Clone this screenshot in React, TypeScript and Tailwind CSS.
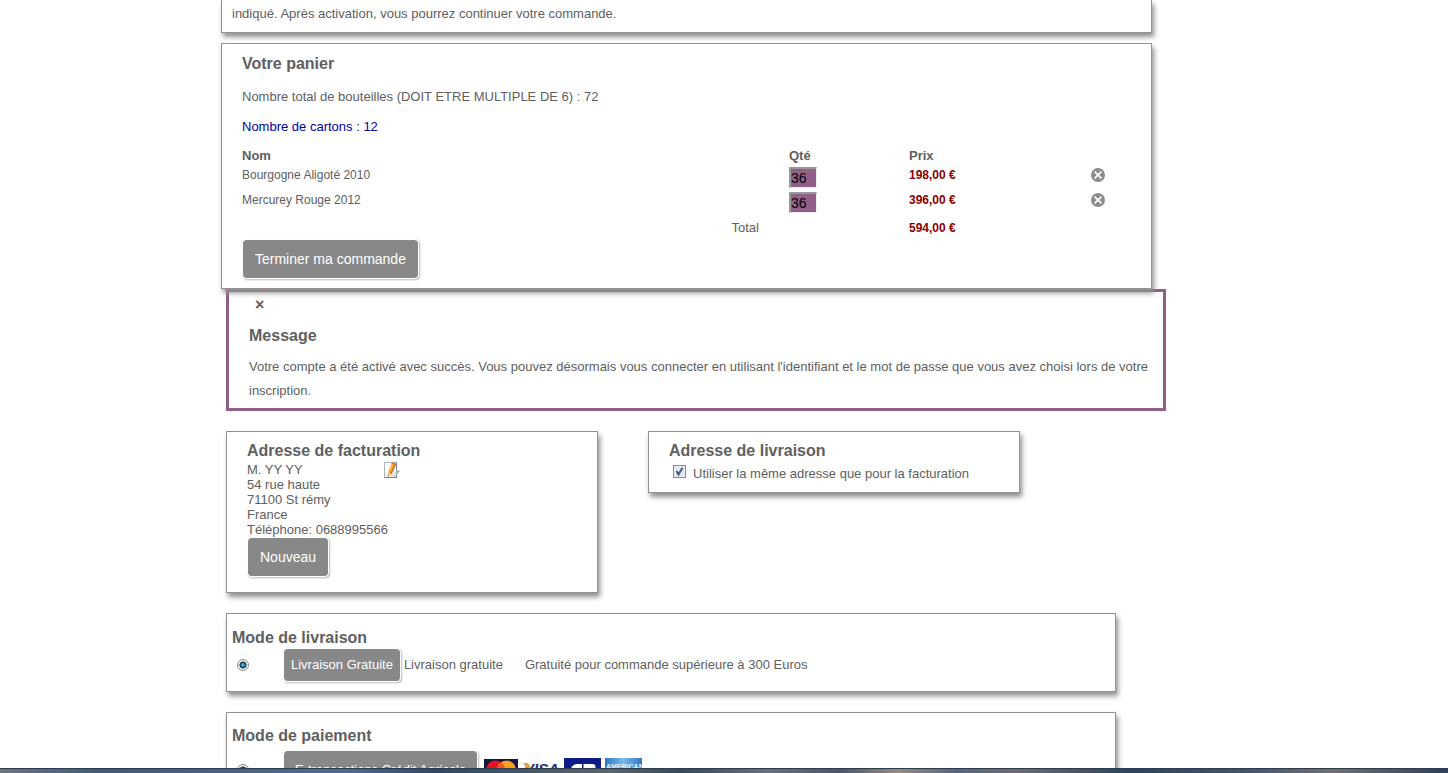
import { useState } from "react";
import type { ReactNode } from "react";

const cardStyle = "border border-[#929292] bg-white shadow-[2px_4px_5px_#909090]";

function Title({ children }: { children: ReactNode }) {
  return <h2 className="text-base leading-5 font-bold">{children}</h2>;
}

const buttonSizes = {
  large: "h-10 px-3 text-sm",
  small: "h-[34px] px-[7px] text-[13px]",
  wide: "h-10 px-[11px] text-[13px]",
};

function GreyButton({ children, size = "large" }: { children: ReactNode; size?: keyof typeof buttonSizes }) {
  return (
    <button
      type="button"
      className={`${buttonSizes[size]} shrink-0 rounded-[4px] border border-white bg-[#888] bg-clip-padding whitespace-nowrap text-white shadow-[1px_1px_2px_#bbb]`}
    >
      {children}
    </button>
  );
}

function RemoveIcon() {
  return (
    <svg viewBox="0 0 14 14" className="size-3.5" aria-hidden="true">
      <circle cx="7" cy="7" r="7" fill="#8d8d8d" />
      <path d="M3.600 3.600 10.400 10.400M10.400 3.600 3.600 10.400" stroke="#fff" strokeWidth="1.700" />
    </svg>
  );
}

function EditIcon() {
  return (
    <svg viewBox="0 0 16 16" className="size-4" aria-hidden="true">
      <defs>
        <linearGradient id="sheet" x1="0" y1="0" x2="1" y2="1">
          <stop offset="0.4" stopColor="#fff" />
          <stop offset="1" stopColor="#cfd6dd" />
        </linearGradient>
      </defs>
      <rect x="0.5" y="0.5" width="12" height="15" fill="url(#sheet)" stroke="#a9b5be" />
      <path d="M0.5 15.5h12v-15" fill="none" stroke="#718292" />
      <path d="M12.5 7.500l3 2-3 3z" fill="#aab4bd" stroke="#aab4bd" />
      <path d="M8 0.5 12 2 7.500 12 4 14 4 10z" fill="#f59a22" />
      <path d="M8.200 0.800 9.600 1.200 5.400 11 4.200 10.600z" fill="#ffc55e" />
      <path d="M11 1.600 12 2 7.500 12 6.600 11.600z" fill="#c96a12" />
      <path d="M8 0.200 12.200 1.800 11.500 3.200 7.300 1.800z" fill="#d9763c" />
      <path d="M4 10.500 7 12.300 4 14z" fill="#efd7a8" />
      <path d="M3.900 12.400 5.100 13.200 3.800 14.200z" fill="#444" />
    </svg>
  );
}

function Radio({ name, label }: { name: string; label: string }) {
  return (
    <input
      type="radio"
      name={name}
      aria-label={label}
      defaultChecked
      className="size-3 shrink-0 appearance-none rounded-full border border-[#8b8f92] bg-[#eef0f1] checked:bg-[radial-gradient(circle_closest-side,#7fd4ee_0,#2a86b0_30%,#123247_62%,#123247_66%,#eef0f1_76%)]"
    />
  );
}

function CardLogos() {
  return (
    <div className="flex gap-1">
      <svg viewBox="0 0 34 23" className="mt-px h-[23px] w-[34px]" role="img" aria-label="Mastercard">
        <rect width="34" height="23" fill="#1a1440" />
        <circle cx="11.500" cy="11" r="9.500" fill="#e3151f" />
        <circle cx="22.500" cy="11" r="9.500" fill="#f7a01e" />
        <path d="M17 3.200a9.500 9.500 0 0 1 0 15.600a9.500 9.500 0 0 1 0-15.600" fill="#f0591c" />
      </svg>
      <svg viewBox="0 0 38 24" className="h-6 w-[38px]" role="img" aria-label="Visa">
        <rect width="38" height="24" fill="#fff" />
        <text x="2" y="16" fontFamily="Liberation Sans" fontWeight="bold" fontStyle="italic" fontSize="15" fill="#1c2f7c">VISA</text>
        <path d="M1 5h5l3 5-2 3z" fill="#e4a33a" />
      </svg>
      <svg viewBox="0 0 37 24" className="h-6 w-[37px]" role="img" aria-label="CB">
        <rect width="37" height="24" fill="#101c86" />
        <path d="M18 6v12h-5a6 6 0 0 1 0-12zM19.500 6h9a3 3 0 0 1 0 6h-9zM19.500 12.500h9a3 3 0 0 1 0 6h-9z" fill="#fff" />
      </svg>
      <svg viewBox="0 0 37 24" className="h-6 w-[37px]" role="img" aria-label="American Express">
        <defs>
          <linearGradient id="amex">
            <stop offset="0" stopColor="#2f79c4" />
            <stop offset="0.500" stopColor="#79b8e8" />
            <stop offset="1" stopColor="#2f79c4" />
          </linearGradient>
        </defs>
        <rect width="37" height="24" fill="url(#amex)" />
        <text x="1" y="11" fontFamily="Liberation Sans" fontWeight="bold" fontSize="7" fill="#e8f4ff">AMERICAN</text>
      </svg>
    </div>
  );
}

const initialItems = [
  { id: 1, name: "Bourgogne Aligoté 2010", qty: "36", price: "198,00 €" },
  { id: 2, name: "Mercurey Rouge 2012", qty: "36", price: "396,00 €" },
];

function Cart() {
  const [items, setItems] = useState(initialItems);
  return (
    <section className={`${cardStyle} relative z-10 mt-2.5 max-w-[931px] px-5 pt-2.5 pb-[9px]`}>
      <Title>Votre panier</Title>
      <p className="mt-[13px] leading-5">Nombre total de bouteilles (DOIT ETRE MULTIPLE DE 6) : 72</p>
      <p className="mt-2.5 leading-5 text-[#0000a0]">Nombre de cartons : 12</p>
      <table className="mt-[9px] w-full table-fixed border-collapse text-left">
        <colgroup>
          <col />
          <col className="w-[120px]" />
          <col className="w-[182px]" />
          <col className="w-10" />
        </colgroup>
        <thead>
          <tr className="h-5 leading-5">
            <th>Nom</th>
            <th>Qté</th>
            <th>Prix</th>
            <td />
          </tr>
        </thead>
        <tbody>
          {items.map((item) => (
            <tr key={item.id} className="h-[25px] align-top text-xs leading-[18px]">
              <td>{item.name}</td>
              <td className="pt-px">
                <input
                  type="text"
                  aria-label={`Quantité ${item.name}`}
                  value={item.qty}
                  onChange={(e) =>
                    setItems(items.map((i) => (i.id === item.id ? { ...i, qty: e.target.value } : i)))
                  }
                  className="block h-[21px] w-7 border-t-2 border-r border-b border-l-2 border-t-[#999] border-r-[#eee] border-b-[#eee] border-l-[#999] bg-[#925f88] text-sm leading-[18px] text-black"
                />
              </td>
              <td className="font-bold text-[#8b0000]">{item.price}</td>
              <td className="pt-0.5">
                <button type="button" aria-label={`Supprimer ${item.name}`} className="block">
                  <RemoveIcon />
                </button>
              </td>
            </tr>
          ))}
          <tr className="h-[23px] leading-[22px]">
            <td className="pr-[30px] text-right">Total</td>
            <td />
            <td className="text-xs leading-[22px] font-bold text-[#8b0000]">594,00 €</td>
            <td />
          </tr>
        </tbody>
      </table>
      <GreyButton>Terminer ma commande</GreyButton>
    </section>
  );
}

export default function App() {
  return (
    <div className="flex h-screen flex-col overflow-hidden bg-white font-['Liberation_Sans',Arial,sans-serif] text-[13px] text-[#606060]">
      <main className="min-h-0 flex-1 overflow-hidden">
        <div className="mx-auto w-full max-w-[1006px]">
          <section className="max-w-[931px] border border-t-0 border-[#929292] bg-white px-2.5 pt-0.5 pb-1.5 leading-6 shadow-[2px_4px_5px_#909090]">
            <p>indiqué. Après activation, vous pourrez continuer votre commande.</p>
          </section>
          <Cart />
          <div className="pl-[5px]">
            <section className="max-w-[940px] border-3 border-[#925f88] pr-[15px] pb-[5px] pl-5">
              <button type="button" aria-label="Fermer" className="ml-1 block h-[25px] px-0.5 text-base font-bold">
                ×
              </button>
              <h2 className="mt-[7px] text-base leading-6 font-bold">Message</h2>
              <p className="mt-[7px] text-justify leading-6">
                Votre compte a été activé avec succès. Vous pouvez désormais vous connecter en utilisant
                l'identifiant et le mot de passe que vous avez choisi lors de votre inscription.
              </p>
            </section>

            <div className="mt-5 flex items-start gap-[50px]">
              <section className={`${cardStyle} w-full max-w-[372px] px-5 pt-[9px] pb-[15px]`}>
                <Title>Adresse de facturation</Title>
                <div className="flex items-start">
                  <address className="w-[137px] pt-px leading-[15px] whitespace-nowrap not-italic">
                    M. YY YY
                    <br />
                    54 rue haute
                    <br />
                    71100 St rémy
                    <br />
                    France
                    <br />
                    Téléphone: 0688995566
                  </address>
                  <a href="#modifier" aria-label="Modifier l'adresse" className="mt-px">
                    <EditIcon />
                  </a>
                </div>
                <GreyButton>Nouveau</GreyButton>
              </section>
              <section className={`${cardStyle} w-full max-w-[372px] px-5 pt-[9px] pb-2`}>
                <Title>Adresse de livraison</Title>
                <label className="flex items-start gap-[7px] pt-[3px] pl-1 leading-5">
                  <span className="relative mt-px flex">
                    <input
                      type="checkbox"
                      defaultChecked
                      className="peer size-[13px] appearance-none border border-[#8a8f92] bg-[#e6e9ec]"
                    />
                    <svg
                      viewBox="0 0 13 13"
                      className="pointer-events-none absolute inset-0 hidden size-[13px] peer-checked:block"
                      aria-hidden="true"
                    >
                      <path d="M3.500 6 5.500 9.500 9.500 2.800" fill="none" stroke="#43568f" strokeWidth="2" />
                    </svg>
                  </span>
                  Utiliser la même adresse que pour la facturation
                </label>
              </section>
            </div>

            <section className={`${cardStyle} mt-5 max-w-[890px] px-[5px] pt-3.5 pb-[9px]`}>
              <Title>Mode de livraison</Title>
              <div className="flex items-center">
                <div className="flex w-[51px] pl-[5px]">
                  <Radio name="livraison" label="Livraison Gratuite" />
                </div>
                <GreyButton size="small">Livraison Gratuite</GreyButton>
                <span className="ml-[3px]">Livraison gratuite</span>
                <span className="ml-[22px]">Gratuité pour commande supérieure à 300 Euros</span>
              </div>
            </section>

            <section className={`${cardStyle} mt-5 max-w-[890px] px-[5px] pt-[13px] pb-2.5`}>
              <Title>Mode de paiement</Title>
              <div className="mt-1 flex items-center">
                <div className="flex w-[51px] pl-[5px]">
                  <Radio name="paiement" label="E-transactions Crédit Agricole" />
                </div>
                <GreyButton size="wide">E-transactions Crédit Agricole</GreyButton>
                <div className="ml-1.5">
                  <CardLogos />
                </div>
              </div>
            </section>
          </div>
        </div>
      </main>
      <footer className="h-[5px] shrink-0 border-t border-[#2c3e4e] bg-[linear-gradient(90deg,#6d7480_0,#405a78_7%,#4c6c90_24%,#2c4866_30%,#5c6468_42%,#34485a_47%,#6a7078_53%,#4a5566_58%,#988a80_62%,#56657a_66%,#6f6b70_70%,#2c4358_78%,#43546c_86%,#736f70_92%,#2c3f56_100%)]" />
    </div>
  );
}
